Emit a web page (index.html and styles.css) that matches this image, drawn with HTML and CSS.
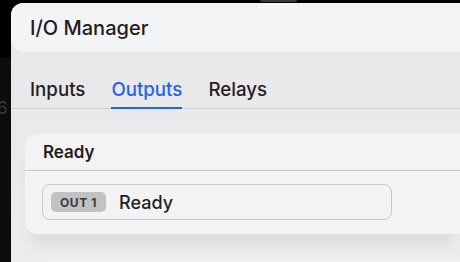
FILE: index.html
```html
<!DOCTYPE html>
<html lang="en">
<head>
    <meta charset="UTF-8">
    <title>I/O Manager</title>
    <link rel="stylesheet" href="styles.css">
</head>
<body>
    <div class="notch"></div>
    <div class="side">
        <span class="side_num">6</span>
    </div>

    <div class="window">
        <div class="header">
            <h1 class="title">I/O Manager</h1>
        </div>

        <div class="tabs">
            <div class="tab">Inputs</div>
            <div class="tab active">Outputs</div>
            <div class="tab">Relays</div>
        </div>

        <div class="content">
            <div class="card">
                <div class="card_head">Ready</div>
                <div class="card_body">
                    <div class="item">
                        <span class="badge">OUT 1</span>
                        <span class="item_label">Ready</span>
                    </div>
                </div>
            </div>
            <div class="card next"></div>
        </div>
    </div>
</body>
</html>
```

FILE: styles.css
```css
body {
    margin: 0;
    width: 460px;
    height: 262px;
    overflow: hidden;
    background: #000;
    font-family: Inter, "Noto Sans", sans-serif;
    color: #1f1f22;
    position: relative;
}

.notch {
    position: absolute;
    left: 260px;
    top: 0;
    width: 37px;
    height: 2px;
    background: #3a3a3c;
    border-radius: 0 0 3px 3px;
}

.side {
    position: absolute;
    left: 0;
    top: 58px;
    width: 11px;
    height: 204px;
    background: #0c0c0c;
}

.side_num {
    position: absolute;
    left: 0;
    top: 40px;
    width: 11px;
    overflow: hidden;
    font-size: 17px;
    line-height: 20px;
    color: #3c3c3c;
    text-indent: -3px;
}

.window {
    margin: 3px 0 0 11px;
    height: 259px;
    background: linear-gradient(#e7e7e9, #ececee);
    border-top-left-radius: 12px;
    overflow: hidden;
}

.header {
    height: 49px;
    background: #f3f4f6;
    border-radius: 12px 0 0 14px;
    display: flex;
    align-items: center;
    padding-left: 19px;
}

.title {
    margin: 0;
    font-size: 20px;
    font-weight: 500;
    color: #1d1d1f;
}

.tabs {
    display: flex;
    gap: 26px;
    height: 56px;
    padding-left: 19px;
    border-bottom: 1px solid #cdcdd0;
}

.tab {
    display: flex;
    align-items: center;
    padding-top: 20px;
    font-size: 18.7px;
    font-weight: 500;
    color: #1f1f22;
    border-bottom: 2px solid transparent;
    margin-bottom: -1px;
}

.tab.active {
    color: #2563eb;
    border-bottom-color: #2563eb;
}

.content {
    padding: 25px 0 0 14px;
    display: flex;
    flex-direction: column;
    gap: 25px;
}

.card {
    background: #f3f3f5;
    border-radius: 12px 0 0 12px;
    box-shadow: 0 14px 16px -6px rgba(0, 0, 0, 0.08);
}

.card_head {
    height: 36px;
    padding-left: 18px;
    display: flex;
    align-items: center;
    font-size: 17px;
    font-weight: 600;
    border-bottom: 1px solid #c6c6c9;
}

.card_body {
    padding: 13px 0 14px 17px;
}

.item {
    box-sizing: border-box;
    width: 350px;
    height: 36px;
    border: 1px solid #c8c8cb;
    border-radius: 8px;
    display: flex;
    align-items: center;
    padding-left: 8px;
    gap: 13px;
}

.badge {
    width: 55px;
    height: 20px;
    border-radius: 5px;
    background: #c2c1c4;
    color: #3a3a3c;
    font-size: 12px;
    font-weight: 700;
    letter-spacing: 0.6px;
    display: flex;
    align-items: center;
    justify-content: center;
}

.item_label {
    font-size: 18px;
    font-weight: 500;
    color: #1f1f22;
}

.card.next {
    height: 40px;
    background: #efeff1;
    margin-left: 12px;
}
```
